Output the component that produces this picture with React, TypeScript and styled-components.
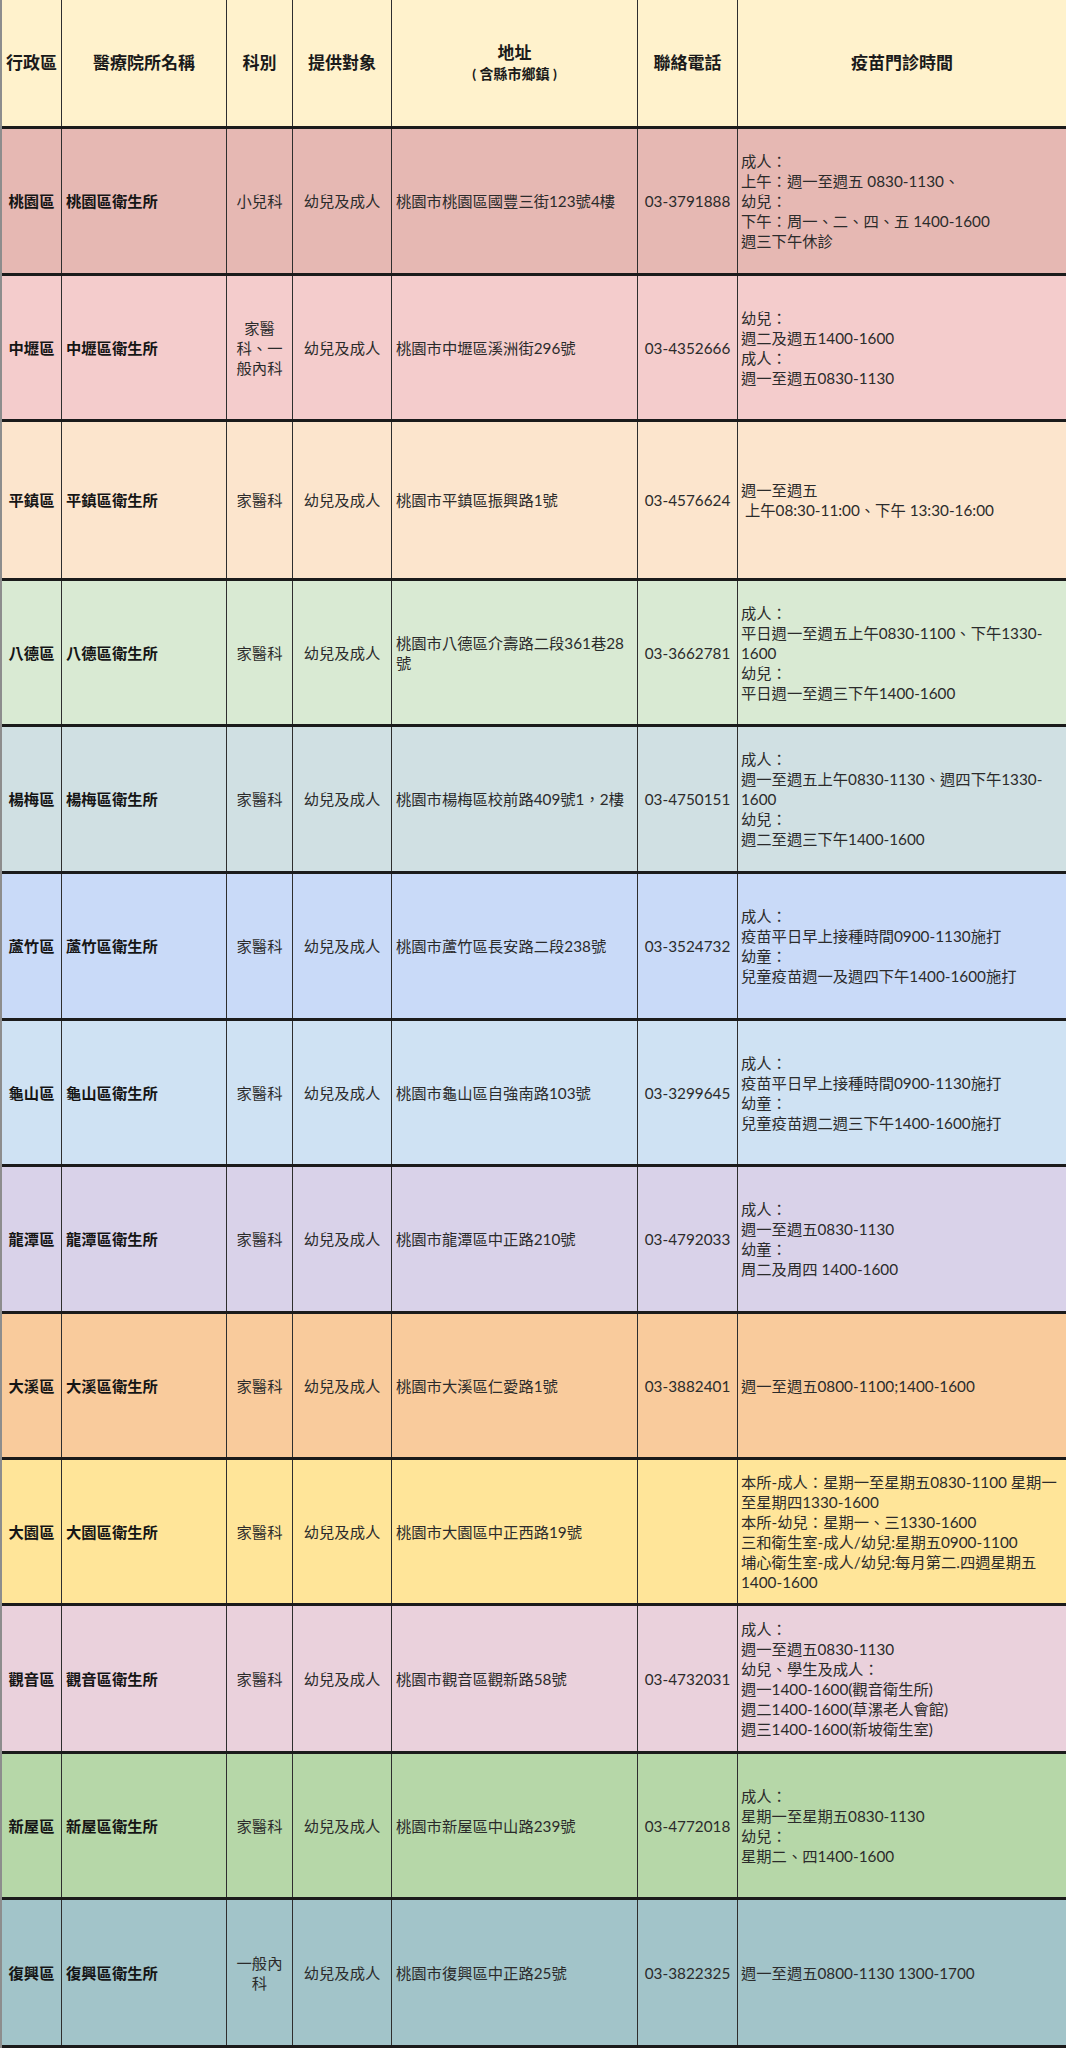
import * as React from 'react';
import styled, { createGlobalStyle } from 'styled-components';

const GlobalStyle = createGlobalStyle`
	* { box-sizing: border-box; }
	html, body {
		margin: 0;
		padding: 0;
		background: #ffffff;
		font-family: Lato, "Noto Sans CJK TC", "Noto Sans", sans-serif;
	}
`;

const COLUMNS = '60px 165px 66px 99px 246px 100px 1fr';

const Sheet = styled.div`
	width: 1066px;
	border-left: 2px solid #8d8d8d;
`;

const Row = styled.div<{ $bg: string; $h: number }>`
	display: grid;
	grid-template-columns: ${COLUMNS};
	height: ${p => p.$h}px;
	background: ${p => p.$bg};
	border-bottom: 3px solid #1b1b1b;
`;

const Cell = styled.div<{ $align?: 'left' | 'center'; $bold?: boolean; $pad?: number }>`
	display: flex;
	flex-direction: column;
	justify-content: center;
	align-items: ${p => (p.$align === 'center' ? 'center' : 'flex-start')};
	text-align: ${p => p.$align || 'left'};
	padding: 0 ${p => (p.$pad === undefined ? 4 : p.$pad)}px;
	border-right: 1px solid #2e2e2e;
	font-size: 15.3px;
	line-height: 20px;
	font-weight: ${p => (p.$bold ? 700 : 400)};
	color: ${p => (p.$bold ? '#151515' : '#2b2b2b')};
	white-space: nowrap;
	&:last-child {
		border-right: none;
	}
`;

const HeadCell = styled.div`
	display: flex;
	flex-direction: column;
	justify-content: center;
	align-items: center;
	text-align: center;
	border-right: 1px solid #2e2e2e;
	font-size: 17px;
	line-height: 22px;
	font-weight: 700;
	color: #1a1a1a;
	white-space: nowrap;
	&:last-child {
		border-right: none;
	}
`;

const SubLabel = styled.span`
	font-size: 14px;
	line-height: 20px;
`;

const Line = styled.span`
	display: block;
`;

interface Clinic {
	district: string;
	name: string;
	dept: string[];
	target: string;
	address: string[];
	phone: string;
	hours: string[];
	bg: string;
	h: number;
}

const clinics: Clinic[] = [
	{
		district: '桃園區', name: '桃園區衛生所', dept: ['小兒科'], target: '幼兒及成人',
		address: ['桃園市桃園區國豐三街123號4樓'], phone: '03-3791888',
		hours: ['成人：', '上午：週一至週五 0830-1130、', '幼兒：', '下午：周一、二、四、五 1400-1600', '週三下午休診'],
		bg: '#e6b8b3', h: 147,
	},
	{
		district: '中壢區', name: '中壢區衛生所', dept: ['家醫', '科、一', '般內科'], target: '幼兒及成人',
		address: ['桃園市中壢區溪洲街296號'], phone: '03-4352666',
		hours: ['幼兒：', '週二及週五1400-1600', '成人：', '週一至週五0830-1130'],
		bg: '#f4cccc', h: 146,
	},
	{
		district: '平鎮區', name: '平鎮區衛生所', dept: ['家醫科'], target: '幼兒及成人',
		address: ['桃園市平鎮區振興路1號'], phone: '03-4576624',
		hours: ['週一至週五', '\u00a0上午08:30-11:00、下午 13:30-16:00'],
		bg: '#fce5cd', h: 159,
	},
	{
		district: '八德區', name: '八德區衛生所', dept: ['家醫科'], target: '幼兒及成人',
		address: ['桃園市八德區介壽路二段361巷28', '號'], phone: '03-3662781',
		hours: ['成人：', '平日週一至週五上午0830-1100、下午1330-', '1600', '幼兒：', '平日週一至週三下午1400-1600'],
		bg: '#d9ead3', h: 146,
	},
	{
		district: '楊梅區', name: '楊梅區衛生所', dept: ['家醫科'], target: '幼兒及成人',
		address: ['桃園市楊梅區校前路409號1，2樓'], phone: '03-4750151',
		hours: ['成人：', '週一至週五上午0830-1130、週四下午1330-', '1600', '幼兒：', '週二至週三下午1400-1600'],
		bg: '#d0e0e3', h: 147,
	},
	{
		district: '蘆竹區', name: '蘆竹區衛生所', dept: ['家醫科'], target: '幼兒及成人',
		address: ['桃園市蘆竹區長安路二段238號'], phone: '03-3524732',
		hours: ['成人：', '疫苗平日早上接種時間0900-1130施打', '幼童：', '兒童疫苗週一及週四下午1400-1600施打'],
		bg: '#c9daf8', h: 147,
	},
	{
		district: '龜山區', name: '龜山區衛生所', dept: ['家醫科'], target: '幼兒及成人',
		address: ['桃園市龜山區自強南路103號'], phone: '03-3299645',
		hours: ['成人：', '疫苗平日早上接種時間0900-1130施打', '幼童：', '兒童疫苗週二週三下午1400-1600施打'],
		bg: '#cfe2f3', h: 146,
	},
	{
		district: '龍潭區', name: '龍潭區衛生所', dept: ['家醫科'], target: '幼兒及成人',
		address: ['桃園市龍潭區中正路210號'], phone: '03-4792033',
		hours: ['成人：', '週一至週五0830-1130', '幼童：', '周二及周四 1400-1600'],
		bg: '#d9d2e9', h: 147,
	},
	{
		district: '大溪區', name: '大溪區衛生所', dept: ['家醫科'], target: '幼兒及成人',
		address: ['桃園市大溪區仁愛路1號'], phone: '03-3882401',
		hours: ['週一至週五0800-1100;1400-1600'],
		bg: '#f9cb9c', h: 146,
	},
	{
		district: '大園區', name: '大園區衛生所', dept: ['家醫科'], target: '幼兒及成人',
		address: ['桃園市大園區中正西路19號'], phone: '',
		hours: [
			'本所-成人：星期一至星期五0830-1100 星期一',
			'至星期四1330-1600',
			'本所-幼兒：星期一、三1330-1600',
			'三和衛生室-成人/幼兒:星期五0900-1100',
			'埔心衛生室-成人/幼兒:每月第二.四週星期五',
			'1400-1600',
		],
		bg: '#ffe599', h: 146,
	},
	{
		district: '觀音區', name: '觀音區衛生所', dept: ['家醫科'], target: '幼兒及成人',
		address: ['桃園市觀音區觀新路58號'], phone: '03-4732031',
		hours: ['成人：', '週一至週五0830-1130', '幼兒、學生及成人：', '週一1400-1600(觀音衛生所)', '週二1400-1600(草漯老人會館)', '週三1400-1600(新坡衛生室)'],
		bg: '#ead1dc', h: 148,
	},
	{
		district: '新屋區', name: '新屋區衛生所', dept: ['家醫科'], target: '幼兒及成人',
		address: ['桃園市新屋區中山路239號'], phone: '03-4772018',
		hours: ['成人：', '星期一至星期五0830-1130', '幼兒：', '星期二、四1400-1600'],
		bg: '#b6d7a8', h: 146,
	},
	{
		district: '復興區', name: '復興區衛生所', dept: ['一般內', '科'], target: '幼兒及成人',
		address: ['桃園市復興區中正路25號'], phone: '03-3822325',
		hours: ['週一至週五0800-1130 1300-1700'],
		bg: '#a2c4c9', h: 148,
	},
];

const Lines = ({ items }: { items: string[] }) => (
	<>
		{items.map((t, i) => <Line key={i}>{t}</Line>)}
	</>
);

export default function App() {
	return (
		<>
			<GlobalStyle />
			<Sheet>
				<Row $bg="#fff2cc" $h={129}>
					<HeadCell>行政區</HeadCell>
					<HeadCell>醫療院所名稱</HeadCell>
					<HeadCell>科別</HeadCell>
					<HeadCell>提供對象</HeadCell>
					<HeadCell>
						<span>地址</span>
						<SubLabel>( 含縣市鄉鎮 )</SubLabel>
					</HeadCell>
					<HeadCell>聯絡電話</HeadCell>
					<HeadCell>疫苗門診時間</HeadCell>
				</Row>
				{clinics.map(c => (
					<Row key={c.district} $bg={c.bg} $h={c.h}>
						<Cell $align="center" $bold $pad={0}>{c.district}</Cell>
						<Cell $bold>{c.name}</Cell>
						<Cell $align="center" $pad={2}><Lines items={c.dept} /></Cell>
						<Cell $align="center" $pad={2}>{c.target}</Cell>
						<Cell><Lines items={c.address} /></Cell>
						<Cell $align="center" $pad={2}>{c.phone}</Cell>
						<Cell $pad={3}><Lines items={c.hours} /></Cell>
					</Row>
				))}
			</Sheet>
		</>
	);
}
